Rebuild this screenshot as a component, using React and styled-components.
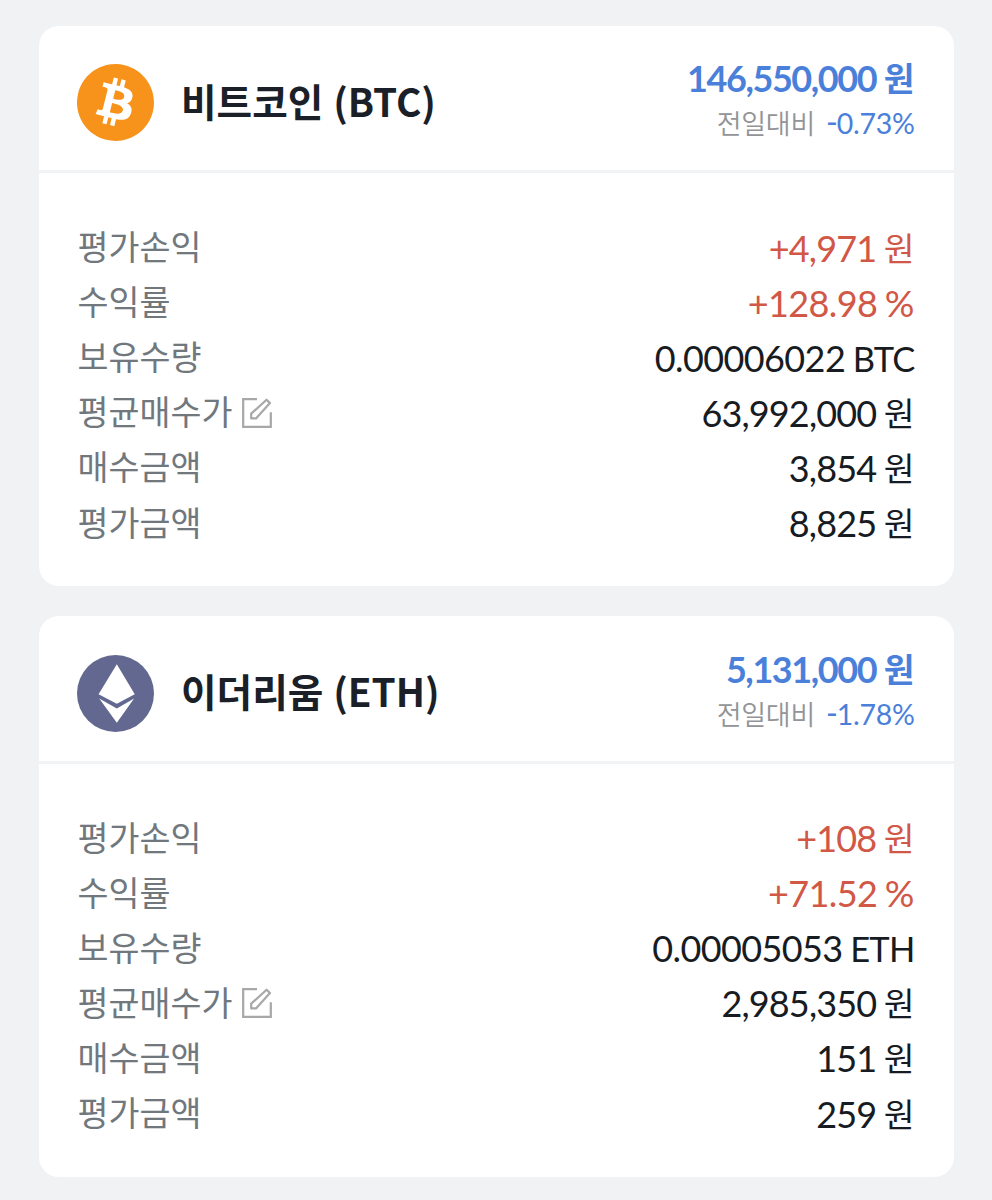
import styled, { createGlobalStyle } from "styled-components";
import { SiBitcoin } from "react-icons/si";

const coins = [
  {
    name: "비트코인 (BTC)",
    icon: <SiBitcoin size={77} color="#f7931a" />,
    price: "146,550,000",
    change: "0.73%",
    rows: [
      { label: "평가손익", value: "+4,971", unit: "원", up: true },
      { label: "수익률", value: "+128.98", unit: "%", up: true },
      { label: "보유수량", value: "0.00006022", unit: "BTC" },
      { label: "평균매수가", value: "63,992,000", unit: "원", editable: true },
      { label: "매수금액", value: "3,854", unit: "원" },
      { label: "평가금액", value: "8,825", unit: "원" },
    ],
  },
  {
    name: "이더리움 (ETH)",
    icon: <EthereumIcon />,
    price: "5,131,000",
    change: "1.78%",
    rows: [
      { label: "평가손익", value: "+108", unit: "원", up: true },
      { label: "수익률", value: "+71.52", unit: "%", up: true },
      { label: "보유수량", value: "0.00005053", unit: "ETH" },
      { label: "평균매수가", value: "2,985,350", unit: "원", editable: true },
      { label: "매수금액", value: "151", unit: "원" },
      { label: "평가금액", value: "259", unit: "원" },
    ],
  },
];

function EthereumIcon() {
  return (
    <svg width="77" height="77" viewBox="0 0 232 232">
      <circle cx="116" cy="116" r="116" fill="#62688f" />
      <path d="M120 28L174 118L120 147L65 118Z" fill="#fff" />
      <path d="M67 131L120 161L172 131L120 204Z" fill="#fff" />
    </svg>
  );
}

function EditIcon() {
  return (
    <svg
      width="30"
      height="30"
      viewBox="0 0 88 88"
      fill="none"
      stroke="#a8a8a8"
      strokeWidth="6.5"
    >
      <path d="M44 3.5H3.5V84.5H84.5V42" />
      <path d="M27 60V46L72 5L82 15L41 60Z" strokeLinejoin="round" />
    </svg>
  );
}

function getUnit(unit) {
  if (unit === "원") return <Won>{unit}</Won>;
  if (unit === "%") return <Percent>{unit}</Percent>;
  return <Symbol>{unit}</Symbol>;
}

export default function App() {
  return (
    <Page>
      <GlobalStyle />
      {coins.map((coin) => (
        <Card key={coin.name}>
          <Header>
            {coin.icon}
            <Title>{coin.name}</Title>
            <Quote>
              <Price>
                {coin.price} <Won>원</Won>
              </Price>
              <Change>
                <ChangeLabel>전일대비</ChangeLabel>
                <Sign>-</Sign>
                {coin.change}
              </Change>
            </Quote>
          </Header>
          <Details>
            {coin.rows.map((row) => (
              <Row key={row.label}>
                <Label>
                  {row.label}
                  {row.editable && <EditIcon />}
                </Label>
                <Value $up={row.up} $tight={row.unit === "원"}>
                  {row.value} {getUnit(row.unit)}
                </Value>
              </Row>
            ))}
          </Details>
        </Card>
      ))}
    </Page>
  );
}

const GlobalStyle = createGlobalStyle`
  body {
    margin: 0;
    background: #f0f2f4;
  }
`;

const Page = styled.main`
  box-sizing: border-box;
  height: 1200px;
  padding: 25.5px 38.5px 0;
  display: flex;
  flex-direction: column;
  gap: 30px;
  overflow: hidden;
  font-family: "Lato", "Noto Sans CJK KR", sans-serif;
`;

const Card = styled.section`
  flex: none;
  height: 560.5px;
  background: #fff;
  border-radius: 20px;
`;

const Header = styled.header`
  box-sizing: border-box;
  height: 147.5px;
  padding: 10px 39px 0 38.5px;
  display: flex;
  align-items: center;
  border-bottom: 3px solid #f2f3f4;
`;

const Title = styled.h2`
  flex: 1;
  margin: 0 0 6px 27px;
  color: #1b1f28;
  font: 700 38.7px/60px "Noto Sans CJK KR", sans-serif;
  word-spacing: 1px;
`;

const Quote = styled.div`
  margin-bottom: 5px;
  display: flex;
  flex-direction: column;
  align-items: flex-end;
  white-space: nowrap;
`;

const Won = styled.span`
  font-size: 33.5px;
  line-height: 1;
  letter-spacing: 0;
  vertical-align: 1px;
`;

const Percent = styled.span`
  font-size: 37px;
  line-height: 1;
  letter-spacing: 0;
`;

const Symbol = styled.span`
  font-size: 34.5px;
  letter-spacing: -0.8px;
`;

const Price = styled.div`
  color: #4a80da;
  font-size: 36px;
  font-weight: 700;
  line-height: 47px;
  letter-spacing: -1.4px;
`;

const Change = styled.div`
  display: flex;
  align-items: baseline;
  color: #4a80da;
  font-size: 28.5px;
  line-height: 42px;
  letter-spacing: -0.3px;
`;

const ChangeLabel = styled.span`
  margin-right: 11px;
  color: #929497;
  font-size: 27px;
  font-weight: 350;
`;

const Sign = styled.span`
  font-size: 32px;
  line-height: 1;
  letter-spacing: -1px;
`;

const Details = styled.div`
  padding: 47.5px 39px 0;
`;

const Row = styled.div`
  height: 55.1px;
  display: flex;
  align-items: center;
  justify-content: space-between;
  white-space: nowrap;
`;

const Label = styled.div`
  margin-bottom: 4px;
  display: flex;
  align-items: center;
  gap: 10px;
  color: #70777d;
  font: 400 33.7px/50px "Noto Sans CJK KR", sans-serif;

  svg {
    margin-top: 3px;
  }
`;

const Value = styled.div`
  color: ${(props) => (props.$up ? "#d15746" : "#171b22")};
  font-size: 36px;
  line-height: 55px;
  letter-spacing: ${(props) => (props.$tight ? "-0.85px" : "-0.6px")};
  word-spacing: -1px;
`;
